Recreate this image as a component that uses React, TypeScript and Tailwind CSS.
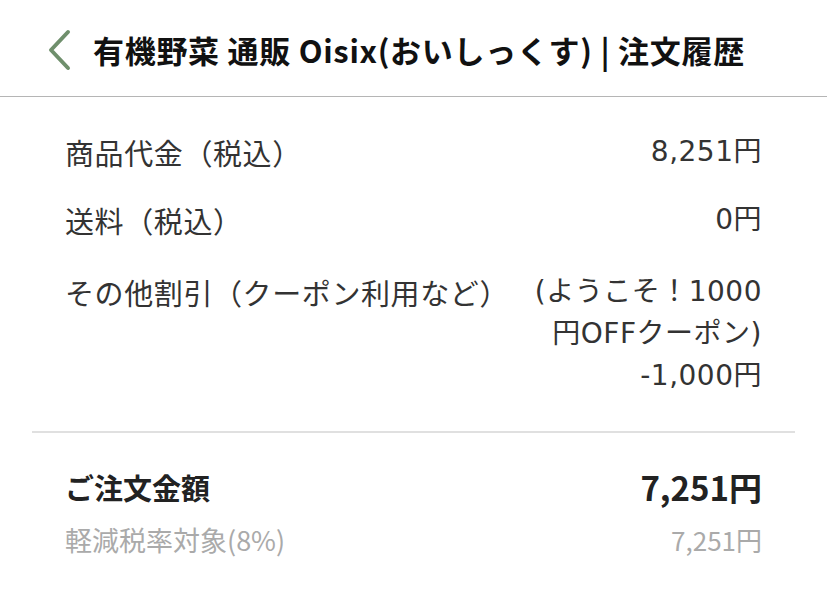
import React from 'react';

const FONT = { fontFamily: '"Noto Sans CJK JP", "Noto Sans", sans-serif' };
const NUM_FONT = { fontFamily: '"DejaVu Sans", "Noto Sans CJK JP", sans-serif' };

function Row({ label, className = '', children }: { label: string; className?: string; children: React.ReactNode }) {
  return (
    <div className={`flex items-start justify-between ${className}`}>
      <div className="text-[29px] leading-[42px] tracking-[0.6px] text-[#333]">{label}</div>
      <div className="text-[28px] leading-[42px] tracking-[0.5px] text-[#333] text-right" style={NUM_FONT}>{children}</div>
    </div>
  );
}

export default function App() {
  return (
    <div className="w-[827px] h-[589px] bg-white overflow-hidden" style={FONT}>
      {/* Header */}
      <div className="h-[97px] pt-[4px] flex items-center border-b border-[#b5b5b5]">
        <div className="pl-[46px] w-[93px] shrink-0">
          <svg width="26" height="42" viewBox="0 0 26 42" fill="none">
            <path d="M22 3 L5 21 L22 39" stroke="#6f8f6c" strokeWidth="4" strokeLinecap="round" strokeLinejoin="round" />
          </svg>
        </div>
        <h1 className="text-[31px] font-bold text-[#111] tracking-[0.7px] whitespace-nowrap">
          有機野菜 通販 Oisix(おいしっくす) | 注文履歴
        </h1>
      </div>

      {/* Price breakdown */}
      <div className="px-[65px] pt-[34px] flex flex-col">
        <Row label="商品代金（税込）">8,251円</Row>
        <Row label="送料（税込）" className="mt-[26px]">0円</Row>
        <Row label="その他割引（クーポン利用など）" className="mt-[30px]">
          <div className="w-[240px]">(ようこそ！1000円OFFクーポン)<br />-1,000円</div>
        </Row>
      </div>

      <div className="mx-[32px] mt-[34px] border-t-2 border-[#e0e0e0]" />

      {/* Total */}
      <div className="px-[65px] pt-[33px]">
        <div className="flex items-center justify-between">
          <div className="text-[29px] leading-[42px] font-bold text-[#222]">ご注文金額</div>
          <div className="text-[33px] leading-[42px] font-bold text-[#222]">7,251円</div>
        </div>
        <div className="flex items-center justify-between mt-[14px]">
          <div className="text-[27px] leading-[36px] text-[#aaa]">軽減税率対象(8%)</div>
          <div className="text-[26px] leading-[36px] text-[#aaa]">7,251円</div>
        </div>
      </div>
    </div>
  );
}
